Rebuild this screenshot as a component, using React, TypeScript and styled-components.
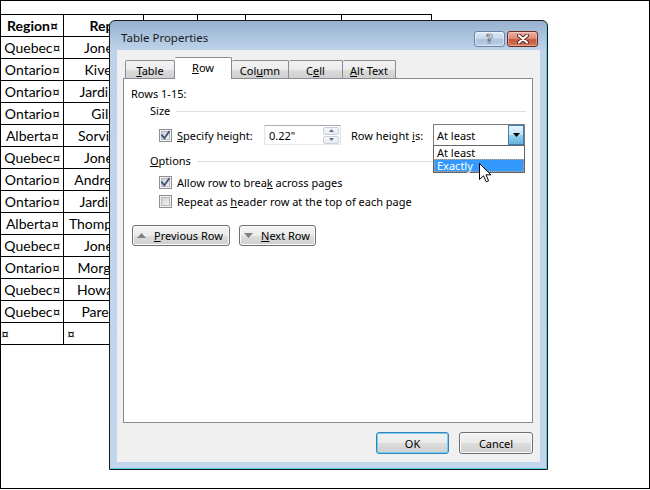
import React from 'react';
import styled, { createGlobalStyle, css } from 'styled-components';

const UI_FONT = `'Noto Sans', 'Open Sans', 'DejaVu Sans', sans-serif`;
const DOC_FONT = `Lato, 'Open Sans', 'Liberation Sans', sans-serif`;

const GlobalStyle = createGlobalStyle`
  html, body { margin: 0; padding: 0; background: #fff; }
  body { width: 650px; height: 490px; overflow: hidden; }
  * { box-sizing: border-box; }
`;

const Screen = styled.div`
  position: relative;
  width: 650px;
  height: 489px;
  border: 1px solid #000;
  background: #fff;
  overflow: hidden;
`;

/* ---------- Word document table ---------- */
const DocTable = styled.div`
  display: grid;
  grid-template-columns: 66px 80px 54px 48px 96px 90px;
  grid-auto-rows: 22px;
  width: max-content;
  margin: 13px 0 0 -4px;
  border-top: 1px solid #000;
  border-left: 1px solid #000;
  font-family: ${DOC_FONT};
  font-size: 14px;
  color: #000;
`;

const Cell = styled.div<{ $head?: boolean; $empty?: boolean }>`
  border-right: 1px solid #000;
  border-bottom: 1px solid #000;
  display: flex;
  align-items: center;
  justify-content: ${(p) => (p.$empty ? 'flex-start' : 'center')};
  padding: ${(p) => (p.$empty ? '0 0 0 3px' : '0 0 0 4px')};
  font-weight: ${(p) => (p.$head ? 700 : 400)};
  white-space: nowrap;
  overflow: hidden;
`;

/* ---------- Dialog window ---------- */
const Dialog = styled.div`
  position: absolute;
  left: 108px;
  top: 19px;
  width: 439px;
  height: 450px;
  border: 1px solid #1a1a1a;
  border-radius: 6px 6px 0 0;
  background: linear-gradient(180deg, #97b2cf 0px, #aec6e0 18px, #bed3ea 29px, #c1d6ed 100%);
  box-shadow: inset -1px -1px 0 #5ccde6;
  padding: 0 7px 7px;
  display: flex;
  flex-direction: column;
  font-family: ${UI_FONT};
  font-size: 11px;
  color: #000;
`;

const TitleBar = styled.div`
  height: 29px;
  flex: none;
  display: flex;
  align-items: flex-start;
  padding-left: 4px;
`;

const Title = styled.div`
  flex: 1;
  margin-top: 9px;
  line-height: 16px;
  font-size: 11.5px;
  color: #1b1b1b;
`;

const CaptionButtons = styled.div`
  display: flex;
  gap: 2px;
  margin-top: 10px;
  margin-right: 2px;
`;

const CaptionButton = styled.div<{ $variant: 'help' | 'close' }>`
  width: 31px;
  height: 16px;
  border-radius: 3px;
  display: flex;
  align-items: center;
  justify-content: center;
  ${(p) =>
    p.$variant === 'close'
      ? css`
          border: 1px solid #6e2b22;
          background: linear-gradient(180deg, #eab0a4 0%, #dc8e7e 45%, #c9553f 55%, #d47a62 100%);
          box-shadow: inset 0 0 0 1px rgba(255, 255, 255, 0.3);
        `
      : css`
          border: 1px solid #6c83a3;
          background: linear-gradient(180deg, #dfe9f5 0%, #c7d7eb 45%, #abc2dd 55%, #bcd0e7 100%);
          box-shadow: inset 0 0 0 1px rgba(255, 255, 255, 0.45);
        `}
`;

const HelpGlyph = styled.span`
  font-family: 'DejaVu Sans', sans-serif;
  font-weight: 700;
  font-size: 12px;
  line-height: 12px;
  color: #fff;
  -webkit-text-stroke: 0.7px #4a5a72;
`;

const Client = styled.div`
  flex: 1;
  background: #f0f0f0;
  display: flex;
  flex-direction: column;
  padding: 7px 7px 0 6px;
`;

const TabStrip = styled.div`
  height: 21px;
  display: flex;
  align-items: flex-end;
  padding-left: 2px;
  position: relative;
  z-index: 1;
`;

const Tab = styled.div<{ $active?: boolean; $w: number }>`
  width: ${(p) => p.$w}px;
  display: flex;
  align-items: center;
  justify-content: center;
  border: 1px solid #898c95;
  border-bottom: none;
  border-radius: 2px 2px 0 0;
  color: #000;
  ${(p) =>
    p.$active
      ? css`
          height: 22px;
          margin-bottom: -1px;
          background: #fff;
          padding-bottom: 2px;
        `
      : css`
          height: 18px;
          background: linear-gradient(180deg, #f3f3f3 0%, #ebebeb 50%, #dddddd 50%, #cfcfcf 100%);
          padding-top: 1px;
          & + & {
            border-left: none;
          }
        `}
`;

const Key = styled.span`
  text-decoration: underline;
  text-underline-offset: 1px;
  text-decoration-thickness: 1px;
`;

const Panel = styled.div`
  height: 345px;
  flex: none;
  border: 1px solid #898c95;
  background: #fff;
  display: flex;
  flex-direction: column;
  padding-right: 6px;
`;

const RowsLabel = styled.div`
  margin: 7px 0 0 7px;
  line-height: 16px;
`;

const GroupHeader = styled.div<{ $mt: number }>`
  display: flex;
  align-items: center;
  gap: 6px;
  margin: ${(p) => p.$mt}px 0 0 26px;
  line-height: 16px;
  &::after {
    content: '';
    flex: 1;
    height: 1px;
    background: #d5dfe5;
  }
`;

const SizeRow = styled.div`
  display: flex;
  align-items: center;
  height: 22px;
  margin: 5px 0 0 35px;
`;

const CheckRow = styled.div<{ $mt: number }>`
  display: flex;
  align-items: center;
  gap: 5px;
  height: 16px;
  margin: ${(p) => p.$mt}px 0 0 35px;
  white-space: nowrap;
`;

const InlineCheck = styled.div`
  display: flex;
  align-items: center;
  gap: 5px;
`;

const FixedLabel = styled.span<{ $w: number; $ml?: number }>`
  width: ${(p) => p.$w}px;
  margin-left: ${(p) => p.$ml ?? 0}px;
  flex: none;
  white-space: nowrap;
`;

const TextBox = styled.div`
  width: 77px;
  height: 20px;
  border: 1px solid;
  border-color: #abadb3 #dbdfe6 #e3e9ef #e2e3ea;
  background: #fff;
  display: flex;
  align-items: center;
  justify-content: space-between;
  padding: 0 0 0 4px;
`;

const Spinner = styled.div`
  width: 16px;
  height: 17px;
  margin-right: 1px;
  display: flex;
  flex-direction: column;
  gap: 1px;
`;

const SpinButton = styled.div`
  flex: 1;
  border: 1px solid #c9d0da;
  border-radius: 2px;
  background: linear-gradient(180deg, #f6f8fa 0%, #e6ebf1 100%);
  display: flex;
  align-items: center;
  justify-content: center;
`;

const Combo = styled.div`
  position: relative;
  width: 92px;
  height: 22px;
  margin-left: 10px;
  border: 1px solid #7a7a7a;
  background: #fff;
  display: flex;
  align-items: center;
  justify-content: space-between;
  padding-left: 3px;
`;

const ComboButton = styled.div`
  width: 16px;
  height: 20px;
  border: 1px solid #3c7fb1;
  background: linear-gradient(180deg, #e5f4fc 0%, #c4e5f6 50%, #98d1ef 50%, #68b3db 100%);
  display: flex;
  align-items: center;
  justify-content: center;
`;

const DropList = styled.div`
  position: absolute;
  left: -1px;
  top: 100%;
  width: 92px;
  border: 1px solid #646464;
  background: #fff;
  z-index: 2;
`;

const DropItem = styled.div<{ $selected?: boolean }>`
  height: 13px;
  line-height: 11px;
  padding-left: 2px;
  border: 1px solid transparent;
  ${(p) =>
    p.$selected &&
    css`
      background: #3399ff;
      color: #fff;
      border: 1px dotted #e3a260;
    `}
`;

const PushButton = styled.div<{ $w: number; $default?: boolean }>`
  width: ${(p) => p.$w}px;
  height: 21px;
  border: 1px solid #707070;
  border-radius: 3px;
  background: linear-gradient(180deg, #f2f2f2 0%, #ebebeb 50%, #dddddd 50%, #cfcfcf 100%);
  box-shadow: inset 0 0 0 1px #fbfbfb;
  display: flex;
  align-items: center;
  justify-content: center;
  color: #000;
  ${(p) =>
    p.$default &&
    css`
      border-color: #3c7fb1;
      box-shadow: inset 0 0 0 1px #6fd1f5;
    `}
`;

const NavButtons = styled.div`
  display: flex;
  gap: 9px;
  margin: 16px 0 0 8px;
`;

const NavButton = styled(PushButton)`
  justify-content: flex-start;
  padding-left: 4px;
  gap: 8px;
`;

const Footer = styled.div`
  display: flex;
  justify-content: flex-end;
  gap: 10px;
  margin-top: 9px;
  & > * {
    height: 22px;
  }
`;

const Pointer = styled.svg`
  position: absolute;
  left: 478px;
  top: 162px;
  z-index: 5;
`;

/* ---------- icons ---------- */
const CheckBox = ({ checked }: { checked?: boolean }) => (
  <svg width="13" height="13" viewBox="0 0 13 13" style={{ flex: 'none' }}>
    <defs>
      <linearGradient id="cbfill" x1="0" y1="0" x2="1" y2="1">
        <stop offset="0" stopColor="#cbcfd5" />
        <stop offset="1" stopColor="#f7f7f7" />
      </linearGradient>
    </defs>
    <rect x="0.5" y="0.5" width="12" height="12" fill="#f4f4f4" stroke="#8e8f8f" />
    <rect x="2.5" y="2.5" width="8" height="8" fill="url(#cbfill)" stroke="#b4b8bd" />
    {checked && (
      <path d="M3 6.3 L5.4 9.2 L10 2.8" fill="none" stroke="#3d5078" strokeWidth="1.8" strokeLinecap="square" />
    )}
  </svg>
);

const Arrow = ({ dir, color, w = 7, h = 4 }: { dir: 'up' | 'down'; color: string; w?: number; h?: number }) => (
  <svg width={w} height={h} viewBox={`0 0 ${w} ${h}`} style={{ flex: 'none' }}>
    {dir === 'up' ? (
      <polygon points={`0,${h} ${w},${h} ${w / 2},0`} fill={color} />
    ) : (
      <polygon points={`0,0 ${w},0 ${w / 2},${h}`} fill={color} />
    )}
  </svg>
);

const CloseGlyph = () => (
  <svg width="14" height="10" viewBox="0 0 14 10">
    <path d="M3 1.5 L11 8.5 M11 1.5 L3 8.5" stroke="#5a2018" strokeWidth="4" strokeLinecap="round" />
    <path d="M3 1.5 L11 8.5 M11 1.5 L3 8.5" stroke="#fff" strokeWidth="2.2" strokeLinecap="round" />
  </svg>
);

const headers = ['Region', 'Rep', 'Item', 'Units', 'Unit Cost', 'Total'];

const rows: string[][] = [
  ['Quebec', 'Jones', 'Pencil', '95', '1.99', '189.05'],
  ['Ontario', 'Kivell', 'Binder', '50', '19.99', '999.50'],
  ['Ontario', 'Jardine', 'Pencil', '36', '4.99', '179.64'],
  ['Ontario', 'Gill', 'Pen', '27', '19.99', '539.73'],
  ['Alberta', 'Sorvino', 'Pencil', '56', '2.99', '167.44'],
  ['Quebec', 'Jones', 'Binder', '60', '4.99', '299.40'],
  ['Ontario', 'Andrews', 'Pencil', '75', '1.99', '149.25'],
  ['Ontario', 'Jardine', 'Pencil', '90', '4.99', '449.10'],
  ['Alberta', 'Thompson', 'Pencil', '32', '1.99', '63.68'],
  ['Quebec', 'Jones', 'Binder', '60', '8.99', '539.40'],
  ['Ontario', 'Morgan', 'Pencil', '90', '4.99', '449.10'],
  ['Quebec', 'Howard', 'Binder', '29', '1.99', '57.71'],
  ['Quebec', 'Parent', 'Binder', '81', '19.99', '1,619.19'],
];

export default function App() {
  return (
    <>
      <GlobalStyle />
      <Screen>
        <DocTable>
          {headers.map((h) => (
            <Cell key={h} $head>
              {h}¤
            </Cell>
          ))}
          {rows.map((r, i) => (
            <React.Fragment key={i}>
              {r.map((v, c) => (
                <Cell key={c}>{v}¤</Cell>
              ))}
            </React.Fragment>
          ))}
          {headers.map((h) => (
            <Cell key={'e' + h} $empty>
              ¤
            </Cell>
          ))}
        </DocTable>

        <Dialog>
          <TitleBar>
            <Title>Table Properties</Title>
            <CaptionButtons>
              <CaptionButton $variant="help">
                <HelpGlyph>?</HelpGlyph>
              </CaptionButton>
              <CaptionButton $variant="close">
                <CloseGlyph />
              </CaptionButton>
            </CaptionButtons>
          </TitleBar>

          <Client>
            <TabStrip>
              <Tab $w={50}>
                <span><Key>T</Key>able</span>
              </Tab>
              <Tab $w={57} $active>
                <span><Key>R</Key>ow</span>
              </Tab>
              <Tab $w={57}>
                <span>Col<Key>u</Key>mn</span>
              </Tab>
              <Tab $w={54}>
                <span>C<Key>e</Key>ll</span>
              </Tab>
              <Tab $w={53}>
                <span><Key>A</Key>lt Text</span>
              </Tab>
            </TabStrip>

            <Panel>
              <RowsLabel>Rows 1-15:</RowsLabel>
              <GroupHeader $mt={1}>Size</GroupHeader>
              <SizeRow>
                <InlineCheck>
                  <CheckBox checked />
                  <FixedLabel $w={87}>
                    <Key>S</Key>pecify height:
                  </FixedLabel>
                </InlineCheck>
                <TextBox>
                  <span>0.22"</span>
                  <Spinner>
                    <SpinButton>
                      <Arrow dir="up" color="#5d7291" w={5} h={3} />
                    </SpinButton>
                    <SpinButton>
                      <Arrow dir="down" color="#5d7291" w={5} h={3} />
                    </SpinButton>
                  </Spinner>
                </TextBox>
                <FixedLabel $w={72} $ml={10}>
                  Row height <Key>i</Key>s:
                </FixedLabel>
                <Combo>
                  <span>At least</span>
                  <ComboButton>
                    <Arrow dir="down" color="#000" w={7} h={4} />
                  </ComboButton>
                  <DropList>
                    <DropItem>At least</DropItem>
                    <DropItem $selected>Exactly</DropItem>
                  </DropList>
                </Combo>
              </SizeRow>

              <GroupHeader $mt={7}>
                <span><Key>O</Key>ptions</span>
              </GroupHeader>
              <CheckRow $mt={5}>
                <CheckBox checked />
                <span>Allow row to brea<Key>k</Key> across pages</span>
              </CheckRow>
              <CheckRow $mt={3}>
                <CheckBox />
                <span>Repeat as <Key>h</Key>eader row at the top of each page</span>
              </CheckRow>

              <NavButtons>
                <NavButton $w={98}>
                  <Arrow dir="up" color="#808080" w={9} h={5} />
                  <span><Key>P</Key>revious Row</span>
                </NavButton>
                <NavButton $w={77}>
                  <Arrow dir="down" color="#808080" w={9} h={5} />
                  <span><Key>N</Key>ext Row</span>
                </NavButton>
              </NavButtons>
            </Panel>

            <Footer>
              <PushButton $w={73} $default>OK</PushButton>
              <PushButton $w={74}>Cancel</PushButton>
            </Footer>
          </Client>
        </Dialog>

        <Pointer width="13" height="20" viewBox="0 0 13 20">
          <polygon
            points="0.5,0.5 0.5,16.5 4.5,12.8 7.2,18.8 9.6,17.8 7,11.8 12,11.8"
            fill="#fff"
            stroke="#000"
            strokeWidth="1"
            strokeLinejoin="miter"
          />
        </Pointer>
      </Screen>
    </>
  );
}
